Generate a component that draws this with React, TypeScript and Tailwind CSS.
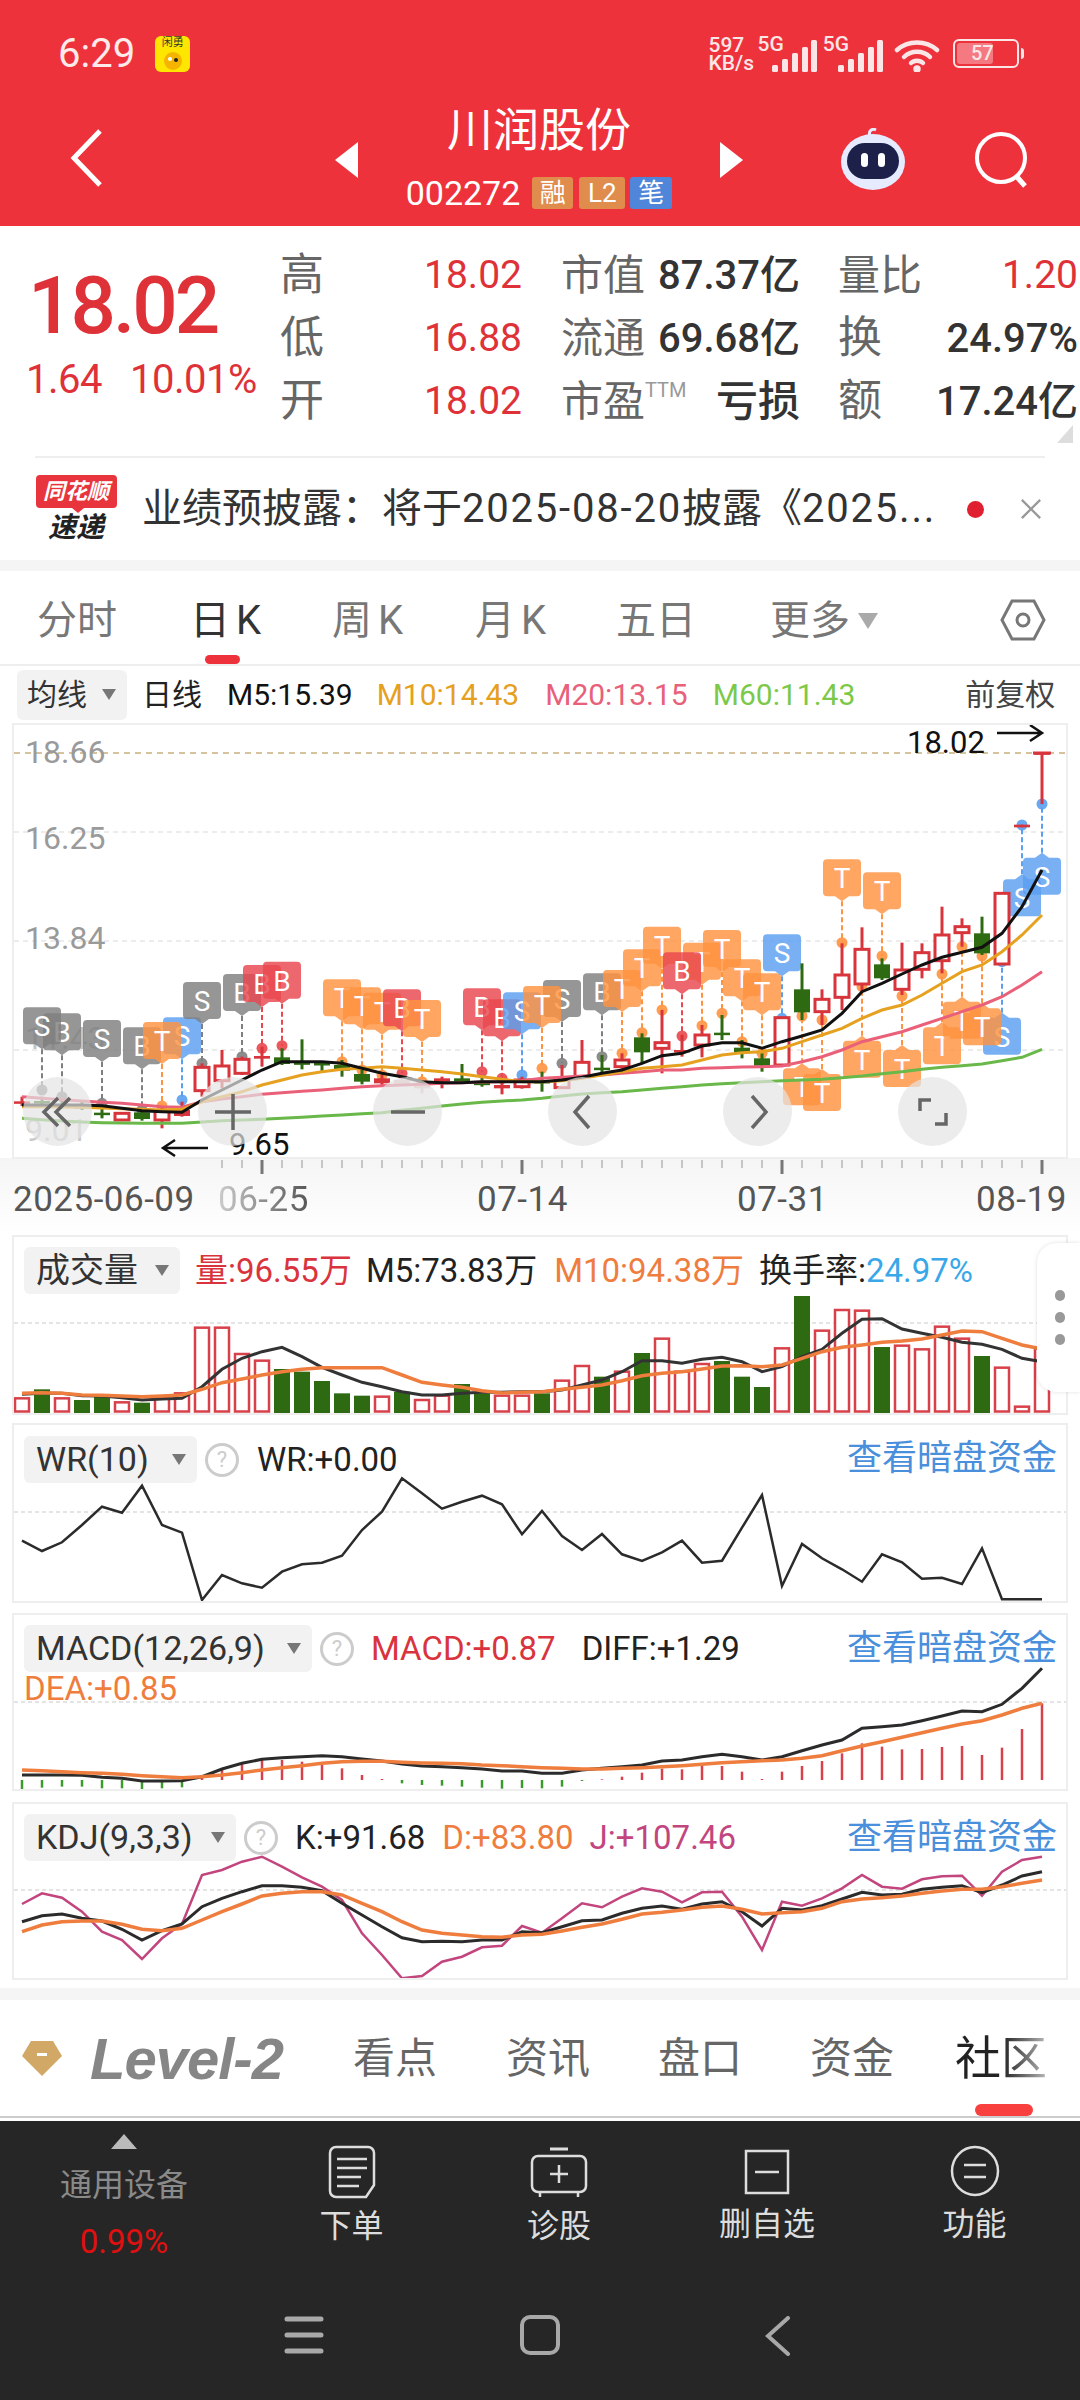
import React from "react";

const X = (i: number) => 22 + 20 * i;
// K-line series are kept in thirds of a pixel: the first 26 sessions from y=900, the rest from y=720.
const KY = (i: number, v: number) => (i < 26 ? 900 : 720) + v / 3;
const line = (vals: number[], f: (i: number, v: number) => number) =>
  vals.map((v, i) => `${X(i)},${f(i, v).toFixed(1)}`).join(" ");

const M5 = [615,615,615,615,617,625,632,635,637,600,570,540,510,485,485,485,490,505,520,530,545,548,548,545,545,545,1085,1080,1072,1060,1050,1030,1007,1000,978,968,968,985,965,948,930,880,815,790,762,735,712,697,682,640,560,450];
const M10 = [620,620,621,622,624,626,628,630,628,605,590,575,555,540,525,515,508,505,500,505,510,515,522,530,538,545,1085,1082,1075,1065,1055,1045,1040,1035,1020,1005,998,995,985,965,945,925,895,870,855,825,790,755,735,695,645,585];
const M20 = [590,595,599,603,607,610,615,620,622,605,597,590,583,578,574,570,565,560,557,555,553,550,548,546,545,542,1075,1072,1068,1065,1060,1055,1050,1050,1045,1043,1041,1040,1038,1025,1010,990,965,950,935,915,895,875,855,830,795,755];
const M60 = [655,659,663,666,668,669,670,670,670,666,662,660,658,655,652,648,645,641,638,631,625,618,612,607,603,600,1135,1128,1122,1118,1115,1110,1105,1100,1095,1091,1088,1085,1082,1080,1078,1073,1068,1061,1055,1048,1042,1037,1032,1022,1012,988];

// top, bottom, wick top, wick bottom, kind (h hollow red, s solid red, g green, p washed out)
type Candle = [number, number, number, number, string];
const CANDLES: Candle[] = [
  [604,610,590,618,"s"],[603,607,590,618,"g"],[612,616,600,625,"g"],[618,622,605,630,"g"],[638,641,625,655,"g"],[640,660,640,660,"h"],[637,657,630,662,"g"],[632,660,620,685,"h"],[630,648,605,650,"s"],
  [502,572,490,590,"h"],[498,542,450,565,"h"],[478,520,470,525,"h"],[468,476,440,500,"s"],[472,492,445,495,"g"],[487,490,418,508,"g"],[489,492,485,518,"g"],[495,512,480,530,"g"],[522,545,510,553,"g"],[535,550,525,557,"s"],[540,555,535,558,"p"],[555,565,545,580,"p"],[535,545,530,565,"s"],[535,545,492,545,"g"],[548,552,530,560,"g"],[555,565,535,583,"s"],[540,560,530,566,"h"],
  [1083,1087,1055,1115,"g"],[1075,1103,1035,1103,"h"],[1027,1070,960,1075,"h"],[1043,1047,1005,1060,"g"],[1020,1040,1000,1050,"h"],[952,997,940,1030,"g"],[968,985,870,1060,"h"],[990,997,945,1010,"s"],[945,975,915,1012,"h"],[938,944,885,960,"g"],[983,997,960,1015,"g"],[1015,1037,1000,1055,"g"],[893,1035,893,1035,"h"],[808,877,730,900,"g"],[838,875,808,915,"h"],[765,832,670,870,"h"],[688,792,622,815,"h"],[733,775,715,780,"g"],[750,808,668,825,"h"],[698,748,670,775,"h"],[645,722,560,760,"h"],[620,638,595,680,"h"],[640,700,590,705,"g"],[520,732,520,732,"h"],[314,322,314,322,"s"],[97,101,97,252,"s"],
];

// Signal kinds: T orange, S grey sell, U blue sell, B red buy, C grey buy
const TAG_COLORS: Record<string, string> = { T: "#FF9340", S: "#7F7F7F", U: "#5A9FF0", B: "#E9474E", C: "#7F7F7F" };
const TAG_LETTER: Record<string, string> = { T: "T", S: "S", U: "S", B: "B", C: "B" };
// session, kind, box top, signal dot, tag sits above (1) or below (0) the candle
const TAGS: [number, string, number, number, number][] = [
  [2,"C",340,590,1],[1,"S",322,570,1],[4,"S",360,610,1],[6,"C",382,630,1],[8,"U",352,600,1],[7,"T",366,618,1],[9,"S",246,490,1],[11,"C",222,470,1],[12,"B",195,445,1],[13,"B",185,437,1],[16,"T",238,485,1],[17,"T",262,510,1],[18,"T",278,525,1],[19,"B",268,520,1],[20,"T",300,545,1],[23,"B",265,515,1],[24,"B",298,535,1],[25,"U",277,525,1],
  [27,"S",780,1030,1],[26,"T",798,1045,1],[29,"C",760,1010,1],[30,"T",750,1000,1],[31,"T",688,938,1],[32,"T",620,870,1],[34,"T",668,917,1],[33,"B",697,948,1],[35,"T",630,880,1],[36,"T",718,965,1],[37,"T",760,1000,1],[38,"U",643,895,1],[41,"T",418,668,1],[43,"T",457,708,1],
  [39,"T",1045,888,0],[40,"T",1062,900,0],[42,"T",962,800,0],[44,"T",990,828,0],[46,"T",922,762,0],[47,"T",845,680,0],[49,"U",893,725,0],[48,"T",865,708,0],[50,"U",478,315,0],[51,"U",413,252,0],
];

function Tag({ t }: { t: [number, string, number, number, number] }) {
  const [i, kind, boxZ, dotZ, up] = t;
  const c = TAG_COLORS[kind];
  const x = X(i);
  const top = KY(i, boxZ);
  const dot = KY(i, dotZ);
  const tipY = up ? top + 42 : top - 5;
  const box = up
    ? `M${x - 15} ${top}h30a4 4 0 0 1 4 4v29a4 4 0 0 1-4 4h-8l-7 5-7-5h-8a4 4 0 0 1-4-4v-29a4 4 0 0 1 4-4z`
    : `M${x} ${top - 5}l7 5h8a4 4 0 0 1 4 4v29a4 4 0 0 1-4 4h-30a4 4 0 0 1-4-4v-29a4 4 0 0 1 4-4h8z`;
  return (
    <g>
      <line x1={x} x2={x} y1={tipY} y2={dot} stroke={c} strokeWidth={2} strokeDasharray="5 3" />
      <circle cx={x} cy={dot} r={5.5} fill={c} fillOpacity={0.9} />
      <path d={box} fill={c} fillOpacity={0.82} />
      <text x={x} y={top + 29} textAnchor="middle" fontSize={28} fill="#fff">
        {TAG_LETTER[kind]}
      </text>
    </g>
  );
}

function CandleMark({ i, c }: { i: number; c: Candle }) {
  const [t, b, wt, wb, kind] = c;
  const x = X(i);
  const col = kind === "g" ? "#2E6A12" : kind === "p" ? "#E9C6C6" : "#D8343C";
  const top = KY(i, t);
  const bot = KY(i, b);
  return (
    <g>
      <line x1={x} x2={x} y1={KY(i, wt)} y2={KY(i, wb)} stroke={col} strokeWidth={3} />
      {kind === "h" ? (
        <rect x={x - 7} y={top} width={14} height={bot - top} fill="#fff" stroke={col} strokeWidth={3} />
      ) : (
        <rect x={x - 8} y={top} width={16} height={Math.max(bot - top, 2.5)} fill={col} />
      )}
    </g>
  );
}

function KChart() {
  return (
    <svg width={1052} height={432} viewBox="14 725 1052 432" className="block">
      <line x1={14} x2={1066} y1={753} y2={753} stroke="#C9AF7E" strokeWidth={1.5} strokeDasharray="6 5" />
      {[832, 941, 1050].map((y) => (
        <line key={y} x1={14} x2={1066} y1={y} y2={y} stroke="#e6e6e6" strokeWidth={1.5} strokeDasharray="5 4" />
      ))}
      <g fontSize={32} fill="#9a9a9a">
        <text x={25} y={763}>18.66</text>
        <text x={25} y={849}>16.25</text>
        <text x={25} y={949}>13.84</text>
        <text x={25} y={1049} fill="#c4c4c4">11.43</text>
        <text x={25} y={1141} fill="#c8c8c8">9.01</text>
      </g>
      {TAGS.map((t) => <Tag key={t[0]} t={t} />)}
      {CANDLES.map((c, i) => <CandleMark key={i} i={i} c={c} />)}
      <line x1={1033} x2={1051} y1={753} y2={753} stroke="#D8343C" strokeWidth={3} />
      <polyline points={line(M60, KY)} fill="none" stroke="#69B849" strokeWidth={3} />
      <polyline points={line(M20, KY)} fill="none" stroke="#EA6079" strokeWidth={3} />
      <polyline points={line(M10, KY)} fill="none" stroke="#E5A11F" strokeWidth={3} />
      <polyline points={line(M5, KY)} fill="none" stroke="#111" strokeWidth={3} />
      <text x={907} y={753} fontSize={31} fill="#111">18.02</text>
      <path d="M997 733h45m-12-8 12 8-12 8" fill="none" stroke="#111" strokeWidth={2.5} />
      <text x={229} y={1155} fontSize={31} fill="#111">9.65</text>
      <path d="M208 1148h-45m12-8-12 8 12 8" fill="none" stroke="#111" strokeWidth={2.5} />
    </svg>
  );
}

function ChartButton({ d }: { d: string }) {
  return (
    <div className="w-[69px] h-[69px] rounded-full bg-[#e4e4e4]/70 flex items-center justify-center">
      <svg width={40} height={40} viewBox="0 0 40 40" fill="none" stroke="#666" strokeWidth={3.5}>
        <path d={d} />
      </svg>
    </div>
  );
}

// Volume bars, thirds of a pixel from y=1230
const VY = (_: number, v: number) => 1230 + v / 3;
const VOL: [string, number][] = [
  ["r",505],["g",478],["r",505],["g",510],["g",500],["r",517],["g",518],["r",505],["r",490],["r",293],["r",293],["r",372],["r",392],["g",417],["g",425],["g",453],["g",490],["g",497],["r",500],["g",485],["r",510],["r",497],["g",462],["g",490],["r",497],["r",497],["g",490],["r",452],["r",408],["g",440],["r",425],["g",369],["r",326],["r",425],["r",402],["g",393],["g",440],["g",471],["r",355],["g",198],["r",302],["r",240],["r",242],["g",351],["r",347],["r",358],["r",290],["r",326],["g",378],["r",413],["r",530],["r",356],
];
const VM5 = [493,490,490,497,498,503,510,507,505,470,418,385,365,352,380,412,435,457,470,485,495,495,490,487,487,485,485,480,465,450,425,392,392,400,388,382,395,425,410,380,358,310,268,266,297,310,322,337,343,358,385,395];
const VM10 = [490,488,490,495,496,498,500,498,495,478,458,447,435,425,418,413,413,413,413,435,457,465,472,482,489,487,485,478,472,465,452,437,430,425,417,408,407,410,405,385,365,352,345,337,333,327,315,303,305,325,345,357];

const WR = [932,963,937,885,830,848,767,885,908,1110,1035,1060,1073,1025,1003,998,977,900,845,745,790,836,815,797,823,913,843,918,960,912,973,993,967,932,998,992,893,795,1068,942,985,1018,1055,973,997,1046,1043,1062,955,1108,1108,1108];

// MACD and KDJ series, thirds of a pixel from y=1600
const MY = (_: number, v: number) => 1600 + v / 3;
const MACD = [568,563,560,560,565,565,568,565,562,528,510,488,480,480,485,495,505,525,537,550,555,557,560,563,566,564,565,560,543,538,530,518,506,508,497,498,515,537,515,498,483,460,430,440,448,447,441,438,465,443,387,310];
const DIFF = [525,525,525,526,532,535,543,543,542,530,507,490,478,473,470,467,470,477,483,492,498,500,503,507,513,513,520,520,510,505,500,495,483,480,470,463,470,480,470,452,435,420,385,380,375,362,348,333,335,313,265,205];
const DEA = [510,512,515,518,520,523,527,530,533,530,525,518,510,503,497,490,485,484,484,487,489,490,491,495,497,500,503,505,507,507,505,503,500,497,493,488,485,482,480,475,467,452,438,425,412,398,385,372,362,345,325,310];
const KDJ_K = [965,947,942,955,963,988,1020,992,972,920,895,875,857,857,862,872,910,945,980,1013,1025,1024,1025,1020,1020,995,998,980,962,960,940,925,918,928,912,905,935,978,925,930,917,897,877,885,883,868,862,857,878,855,828,815];
const KDJ_D = [995,975,965,963,963,973,988,992,985,960,935,912,888,880,875,875,885,910,935,965,990,1000,1005,1010,1012,1005,1003,993,982,972,958,942,937,930,922,918,928,942,938,935,925,905,897,893,888,880,873,868,868,860,850,840];
const KDJ_J = [912,880,893,935,995,1020,1077,1015,972,825,810,785,770,800,832,860,900,1000,1065,1135,1128,1085,1070,1042,1037,978,998,955,910,922,890,865,875,907,877,875,950,1050,905,917,895,865,825,860,866,838,829,827,887,815,780,770];

function Dash({ y }: { y: number }) {
  return <line x1={14} x2={1066} y1={y} y2={y} stroke="#dcdcdc" strokeWidth={1.5} strokeDasharray="4 3" />;
}

function Panel({ top, h, children }: { top: number; h: number; children: React.ReactNode }) {
  return (
    <section className="relative ml-3 w-[1056px] border-2 border-[#eeeeee]">
      <svg width={1052} height={h - 4} viewBox={`14 ${top + 2} 1052 ${h - 4}`} className="block">
        {children}
      </svg>
    </section>
  );
}

function Selector({ label, w }: { label: string; w: string }) {
  return (
    <div className={`${w} h-[47px] rounded-md bg-[#f2f2f2] flex items-center justify-between pl-[12px] pr-[11px] text-[34px] text-[#333] whitespace-nowrap`}>
      <span>{label}</span>
      <span className="w-0 h-0 border-x-[7px] border-t-[11px] border-x-transparent border-t-[#777]" />
    </div>
  );
}

function Help() {
  return (
    <span className="ml-[8px] w-[34px] h-[34px] rounded-full border-[3px] border-[#ccc] text-[#ccc] text-[22px] flex items-center justify-center">?</span>
  );
}

function DarkLink() {
  return <span className="absolute right-[11px] top-[13px] text-[35px] leading-[46px] text-[#4A8FDB]">查看暗盘资金</span>;
}

function BarsSignal() {
  return (
    <svg width={45} height={32} viewBox="0 0 45 32" fill="#fbe6e7">
      <rect x={0} y={25} width={6} height={7} rx={1.5} />
      <rect x={10} y={19} width={6} height={13} rx={1.5} />
      <rect x={20} y={13} width={6} height={19} rx={1.5} />
      <rect x={30} y={7} width={6} height={25} rx={1.5} />
      <rect x={39} y={0} width={6} height={32} rx={1.5} />
    </svg>
  );
}

export default function App() {
  return (
    <div className="relative w-[1080px] h-[2400px] overflow-hidden bg-white font-['Roboto','Noto_Sans_CJK_SC',sans-serif]">
      {/* Top bar */}
      <header className="h-[226px] bg-[#EE323C] text-white">
        <div className="h-[104px] flex items-start justify-between pt-[36px] pl-[58px] pr-[56px]">
          <div className="flex items-center gap-[20px]">
            <span className="text-[40px] leading-[36px] text-[#fdeaea]">6:29</span>
            <div className="w-[35px] h-[36px] rounded-[6px] bg-[#FFE600] flex flex-col items-center text-[#333] overflow-hidden">
              <span className="text-[11px] leading-[14px] whitespace-nowrap">闲勇</span>
              <svg width={26} height={20} viewBox="0 0 26 20">
                <circle cx={13} cy={11} r={9} fill="#F5B400" />
                <circle cx={10} cy={9} r={2} fill="#fff" />
                <circle cx={16} cy={10} r={2} fill="#222" />
              </svg>
            </div>
          </div>
          <div className="flex items-start text-[#fbe6e7] font-medium">
            <div className="flex flex-col text-[21px] leading-[18px] w-[49px]">
              <span>597</span>
              <span>KB/s</span>
            </div>
            <span className="text-[21px] leading-[17px]">5G</span>
            <div className="-ml-[12px] mt-[4px]"><BarsSignal /></div>
            <span className="ml-[6px] text-[21px] leading-[17px]">5G</span>
            <div className="-ml-[11px] mt-[4px]"><BarsSignal /></div>
            <svg className="ml-[11px] mt-[3px]" width={47} height={33} viewBox="0 0 47 33" fill="none" stroke="#fbe6e7" strokeWidth={4.5} strokeLinecap="round">
              <path d="M3 11c11-10 29-10 40 0" />
              <path d="M10 18c7-7 19-7 26 0" />
              <path d="M17 24c3-3 9-3 12 0" />
              <circle cx={23} cy={30} r={1.5} fill="#fbe6e7" />
            </svg>
            <div className="ml-[12px] mt-[3px] flex items-center">
              <div className="w-[66px] h-[29px] rounded-[6px] border-2 border-[#fbe6e7] p-[2px] relative">
                <div className="h-full w-[36px] rounded-[3px] bg-white/35" />
                <span className="absolute left-[16px] top-0 text-[20px] leading-[25px]">57</span>
              </div>
              <span className="ml-[2px] w-[3px] h-[11px] rounded-r bg-[#fbe6e7]" />
            </div>
          </div>
        </div>
        <div className="grid grid-cols-[335px_408px_99px_132px_1fr] items-start">
          <svg className="ml-[68px] mt-[24px]" width={36} height={60} viewBox="0 0 36 60" fill="none" stroke="#fff" strokeWidth={5}>
            <path d="M32 3 6 30l26 27" />
          </svg>
          <div className="flex items-start justify-between">
            <span className="mt-[38px] w-0 h-0 border-y-[18px] border-r-[23px] border-y-transparent border-r-white" />
            <div className="flex flex-col items-center">
              <h1 className="text-[46px] leading-[52px] font-normal">川润股份</h1>
              <div className="mt-[21px] flex items-center">
                <span className="text-[34px] leading-[32px]">002272</span>
                <span className="ml-[12px] w-[41px] h-[32px] rounded-[3px] bg-[#E08C4C] text-[26px] leading-[32px] text-center">融</span>
                <span className="ml-[6px] w-[46px] h-[32px] rounded-[3px] bg-[#E08C4C] text-[26px] leading-[32px] text-center">L2</span>
                <span className="ml-[5px] w-[42px] h-[32px] rounded-[3px] bg-[#4F86D9] text-[26px] leading-[32px] text-center">笔</span>
              </div>
            </div>
            <span className="mt-[38px] w-0 h-0 border-y-[18px] border-l-[23px] border-y-transparent border-l-white" />
          </div>
          <div className="col-start-4 -ml-[2px] mt-[24px]">
            <svg width={66} height={62} viewBox="0 0 66 62">
              <path d="M30 8c-2-5 2-8 6-6" fill="none" stroke="#e7ecff" strokeWidth={3} />
              <ellipse cx={33} cy={34} rx={32} ry={28} fill="#e6ebff" />
              <rect x={7} y={15} width={52} height={36} rx={18} fill="#1D2048" />
              <rect x={21} y={25} width={7} height={14} rx={3.5} fill="#fff" />
              <rect x={38} y={25} width={7} height={14} rx={3.5} fill="#fff" />
            </svg>
          </div>
          <svg className="mt-[28px]" width={58} height={56} viewBox="0 0 58 56" fill="none" stroke="#fff" strokeWidth={4}>
            <circle cx={27} cy={26} r={24} />
            <path d="M43 45l8 9" strokeWidth={5} />
          </svg>
        </div>
      </header>

      {/* Quote summary */}
      <section className="relative h-[230px] flex pt-[18px]">
        <div className="w-[280px] pl-[28px]">
          <div className="text-[80px] leading-[88px] mt-[18px] tracking-[-3px] text-[#DE3138] font-medium">18.02</div>
          <div className="mt-[8px] flex text-[#DE3138] text-[40px] leading-[44px] tracking-[-0.5px]">
            <span className="-ml-[2px]">1.64</span>
            <span className="ml-[28px]">10.01%</span>
          </div>
        </div>
        <div className="grid grid-cols-[242px_278px_278px] auto-rows-[63px] text-[42px] leading-[63px] text-[#666]">
          <div className="flex justify-between"><span className="text-[44px]">高</span><span className="text-[#DE3138] text-[39px]">18.02</span></div>
          <div className="pl-[39px] flex justify-between"><span>市值</span><span className="text-[#333] text-[40px] font-medium">87.37亿</span></div>
          <div className="pl-[38px] flex justify-between"><span>量比</span><span className="text-[#DE3138] text-[39px]">1.20</span></div>
          <div className="flex justify-between"><span className="text-[44px]">低</span><span className="text-[#DE3138] text-[39px]">16.88</span></div>
          <div className="pl-[39px] flex justify-between"><span>流通</span><span className="text-[#333] text-[40px] font-medium">69.68亿</span></div>
          <div className="pl-[38px] flex justify-between"><span className="text-[44px]">换</span><span className="text-[#333] text-[40px] font-medium">24.97%</span></div>
          <div className="flex justify-between"><span className="text-[44px]">开</span><span className="text-[#DE3138] text-[39px]">18.02</span></div>
          <div className="pl-[39px] flex justify-between">
            <span className="flex items-start">市盈<span className="text-[20px] leading-[40px] text-[#999]">TTM</span></span>
            <span className="text-[#333] text-[42px] font-medium">亏损</span>
          </div>
          <div className="pl-[38px] flex justify-between"><span className="text-[44px]">额</span><span className="text-[#333] text-[40px] font-medium">17.24亿</span></div>
        </div>
        <span className="absolute right-[7px] bottom-[13px] w-0 h-0 border-l-[16px] border-b-[18px] border-l-transparent border-b-[#ddd]" />
      </section>

      {/* News strip */}
      <div className="mx-[35px] border-t-2 border-[#eeeeee] h-[104px] flex items-center">
        <div className="w-[82px] flex flex-col items-center">
          <div className="relative w-[81px] h-[33px] rounded-[4px] bg-[#E8343C] text-white text-[22px] leading-[33px] text-center italic font-bold whitespace-nowrap">
            同花顺
            <span className="absolute left-[36px] top-full w-0 h-0 border-x-[6px] border-t-[5px] border-x-transparent border-t-[#E8343C]" />
          </div>
          <div className="mt-[5px] text-[#222] text-[28px] leading-[30px] italic font-bold">速递</div>
        </div>
        <div className="ml-[25px] w-[805px] text-[40px] leading-[50px] text-[#333] whitespace-nowrap">
          业绩预披露：将于<span className="tracking-[1.8px]">2025-08-20</span>披露《<span className="tracking-[1.8px]">2025...</span>
        </div>
        <span className="ml-[20px] w-[17px] h-[17px] rounded-full bg-[#E02030]" />
        <svg className="ml-[36px]" width={22} height={24} viewBox="0 0 24 24" stroke="#999" strokeWidth={2.5}>
          <path d="M2 2l20 20M22 2 2 22" />
        </svg>
      </div>

      <div className="h-[11px] bg-[#f5f5f5]" />

      {/* Period tabs */}
      <nav className="h-[95px] pt-[6px] border-b-2 border-[#eeeeee] grid grid-cols-[153px_142px_143px_141px_154px_230px_1fr] pl-[37px] items-center text-[40px] text-[#777] relative">
        <span>分时</span>
        <span className="relative text-[#333]">日<span className="ml-[6px]">K</span>
          <span className="absolute left-[15px] top-[64px] w-[35px] h-[9px] rounded-full bg-[#EE323C]" />
        </span>
        <span>周<span className="ml-[6px]">K</span></span>
        <span>月<span className="ml-[6px]">K</span></span>
        <span>五日</span>
        <span className="flex items-center">更多<span className="ml-[8px] w-0 h-0 border-x-[10px] border-t-[16px] border-x-transparent border-t-[#aaa]" /></span>
        <svg className="absolute left-[1000px] top-[28px]" width={46} height={42} viewBox="0 0 46 42" fill="none" stroke="#777" strokeWidth={3}>
          <path d="M12 2h22l10 19-10 19H12L2 21z" />
          <circle cx={23} cy={21} r={6} />
        </svg>
      </nav>

      {/* Moving average legend */}
      <div className="h-[57px] flex items-center text-[30px] pl-[17px]">
        <div className="w-[110px] h-[50px] rounded-md bg-[#f2f2f2] flex items-center justify-between pl-[10px] pr-[11px] text-[#333]">
          <span>均线</span>
          <span className="w-0 h-0 border-x-[7px] border-t-[11px] border-x-transparent border-t-[#777]" />
        </div>
        <span className="ml-[15px] text-[#222]">日线</span>
        <span className="ml-[25px] text-[#111]">M5:15.39</span>
        <span className="ml-[24px] text-[#E5A020]">M10:14.43</span>
        <span className="ml-[26px] text-[#E8607A]">M20:13.15</span>
        <span className="ml-[25px] text-[#7CC94A]">M60:11.43</span>
        <span className="ml-[110px] text-[#444]">前复权</span>
      </div>

      {/* K-line chart */}
      <section className="relative ml-3 w-[1056px] border-2 border-[#eeeeee]">
        <KChart />
        <div className="absolute left-[9px] top-[352px] flex gap-[106px]">
          <ChartButton d="M20 6 6 20l14 14M32 6 18 20l14 14" />
          <ChartButton d="M20 2v36M2 20h36" />
          <ChartButton d="M3 20h34" />
          <ChartButton d="M26 4 12 20l14 16" />
          <ChartButton d="M14 4l14 16-14 16" />
          <ChartButton d="M18 8H7v11M22 32h11V21" />
        </div>
      </section>

      {/* Date axis */}
      <div className="h-[77px] -mt-[1px] bg-linear-to-b from-[#f5f5f5] to-white">
        <svg width={1080} height={24} viewBox="0 0 1080 24" className="block">
          {Array.from({ length: 42 }, (_, k) => k + 10).map((i) =>
            (i - 12) % 13 === 0 ? (
              <line key={i} x1={X(i)} x2={X(i)} y1={2} y2={16} stroke="#777" strokeWidth={3} />
            ) : (
              <line key={i} x1={X(i)} x2={X(i)} y1={2} y2={10} stroke="#b5b5b5" strokeWidth={1.5} />
            ),
          )}
        </svg>
        <div className="grid grid-cols-[205px_259px_260px_239px_1fr] pl-[13px] text-[35px] leading-[36px] text-[#555] tracking-[0.5px]">
          <span>2025-06-09</span>
          <span className="w-[92px] bg-linear-to-r from-[#ccc] to-[#555] bg-clip-text text-transparent">06-25</span>
          <span>07-14</span>
          <span>07-31</span>
          <span>08-19</span>
        </div>
      </div>

      {/* Volume */}
      <div className="relative">
        <Panel top={1235} h={180}>
          <Dash y={1323} />
          {VOL.map(([k, v], i) =>
            k === "g" ? (
              <rect key={i} x={X(i) - 8} y={VY(i, v)} width={16} height={1413 - VY(i, v)} fill="#2E6A12" />
            ) : (
              <rect key={i} x={X(i) - 7} y={VY(i, v)} width={14} height={1411.5 - VY(i, v)} fill="#fff" stroke="#D8404A" strokeWidth={2.5} />
            ),
          )}
          <polyline points={line(VM5, VY)} fill="none" stroke="#333" strokeWidth={3} />
          <polyline points={line(VM10, VY)} fill="none" stroke="#EE7D3E" strokeWidth={3.5} />
        </Panel>
        <div className="absolute left-[24px] top-[11px] flex items-center text-[33px] whitespace-nowrap">
          <Selector label="成交量" w="w-[156px]" />
          <span className="ml-[15px] text-[#D9343D]">量:96.55万</span>
          <span className="ml-[14px] text-[#222]">M5:73.83万</span>
          <span className="ml-[17px] text-[#EE7D3E]">M10:94.38万</span>
          <span className="ml-[15px] text-[#222]">换手率:<span className="text-[#3AA7E8]">24.97%</span></span>
        </div>
        <div className="absolute right-0 top-[8px] w-[43px] h-[149px] rounded-l-[20px] bg-white shadow-[0_0_4px_rgba(0,0,0,0.12)] flex flex-col items-center justify-center gap-[11px] pl-[2px]">
          <span className="w-[10px] h-[11px] rounded-full bg-[#999]" />
          <span className="w-[10px] h-[11px] rounded-full bg-[#999]" />
          <span className="w-[10px] h-[11px] rounded-full bg-[#999]" />
        </div>
      </div>

      {/* WR */}
      <div className="relative mt-[8px]">
        <Panel top={1423} h={180}>
          <Dash y={1512} />
          <polyline points={line(WR, VY)} fill="none" stroke="#2b2b2b" strokeWidth={2.5} />
        </Panel>
        <div className="absolute left-[24px] top-[12px] flex items-center text-[33px] text-[#222]">
          <Selector label="WR(10)" w="w-[173px]" />
          <Help />
          <span className="ml-[18px]">WR:+0.00</span>
        </div>
        <div className="absolute left-3 top-0 w-[1056px]"><DarkLink /></div>
      </div>

      {/* MACD */}
      <div className="relative mt-[10px]">
        <Panel top={1613} h={178}>
          <Dash y={1702} />
          {MACD.map((v, i) => (
            <line key={i} x1={X(i)} x2={X(i)} y1={1780} y2={MY(i, v)} stroke={v > 540 ? "#3C9A2E" : "#D8404A"} strokeWidth={2.5} />
          ))}
          <polyline points={line(DIFF, MY)} fill="none" stroke="#2b2b2b" strokeWidth={3} />
          <polyline points={line(DEA, MY)} fill="none" stroke="#EE7D3E" strokeWidth={3.5} />
        </Panel>
        <div className="absolute left-[24px] top-[11px] flex items-center text-[33px] whitespace-nowrap">
          <Selector label="MACD(12,26,9)" w="w-[288px]" />
          <Help />
          <span className="ml-[17px] text-[#D9343D]">MACD:+0.87</span>
          <span className="ml-[26px] text-[#222]">DIFF:+1.29</span>
        </div>
        <div className="absolute left-[24px] top-[58px] text-[33px] leading-[36px] text-[#EE7D3E]">DEA:+0.85</div>
        <div className="absolute left-3 top-0 w-[1056px]"><DarkLink /></div>
      </div>

      {/* KDJ */}
      <div className="relative mt-[11px]">
        <Panel top={1802} h={178}>
          <Dash y={1890} />
          <polyline points={line(KDJ_J, MY)} fill="none" stroke="#C2457E" strokeWidth={2.5} />
          <polyline points={line(KDJ_K, MY)} fill="none" stroke="#2b2b2b" strokeWidth={3} />
          <polyline points={line(KDJ_D, MY)} fill="none" stroke="#EE7D3E" strokeWidth={3.5} />
        </Panel>
        <div className="absolute left-[24px] top-[11px] flex items-center text-[33px] whitespace-nowrap">
          <Selector label="KDJ(9,3,3)" w="w-[212px]" />
          <Help />
          <span className="ml-[17px] text-[#222]">K:+91.68</span>
          <span className="ml-[17px] text-[#EE7D3E]">D:+83.80</span>
          <span className="ml-[16px] text-[#C2457E]">J:+107.46</span>
        </div>
        <div className="absolute left-3 top-0 w-[1056px]"><DarkLink /></div>
      </div>

      <div className="h-[12px] mt-[8px] bg-[#f5f5f5]" />

      {/* Section tabs */}
      <nav className="relative h-[118px] border-b-2 border-[#cccccc] flex items-center pl-[22px] text-[42px] text-[#666]">
        <svg width={40} height={36} viewBox="0 0 40 36">
          <path d="M9 1h22l9 15-20 20L0 16z" fill="#D2A867" />
          <rect x={15} y={13} width={10} height={3} fill="#fff" />
        </svg>
        <span className="ml-[28px] w-[263px] text-[58px] font-bold italic text-[#868686] font-['Liberation_Sans',sans-serif] tracking-[-1px]">Level-2</span>
        <span className="w-[153px]">看点</span>
        <span className="w-[152px]">资讯</span>
        <span className="w-[152px]">盘口</span>
        <span className="w-[145px]">资金</span>
        <span className="text-[46px] bg-linear-to-r from-[#222] from-50% to-[#bbb] bg-clip-text text-transparent">社区</span>
        <span className="absolute left-[975px] bottom-0 w-[58px] h-[12px] rounded-full bg-[#F8403F]" />
      </nav>

      {/* Bottom toolbar */}
      <footer className="mt-[3px] h-[279px] bg-[#262626]">
        <div className="h-[190px] flex">
          <div className="w-[248px] flex flex-col items-center pt-[13px]">
            <span className="w-0 h-0 border-x-[13px] border-b-[15px] border-x-transparent border-b-[#bbb]" />
            <span className="mt-[16px] text-[32px] leading-[40px] text-[#8a8a8a]">通用设备</span>
            <span className="mt-[17px] text-[33px] leading-[40px] text-[#E01010]">0.99%</span>
          </div>
          <div className="flex-1 grid grid-cols-[207px_208px_208px_1fr] text-[#ddd] text-[32px] leading-[40px]">
            <div className="flex flex-col items-center">
              <svg className="mt-[24px]" width={48} height={54} viewBox="0 0 48 54" fill="none" stroke="#ddd" strokeWidth={2.5}>
                <path d="M8 2h32a6 6 0 0 1 6 6v32l-8 12H8a6 6 0 0 1-6-6V8a6 6 0 0 1 6-6z" />
                <path d="M9 14h30M9 23h30M9 32h24M9 41h22" />
              </svg>
              <span className="mt-[7px]">下单</span>
            </div>
            <div className="flex flex-col items-center">
              <svg className="mt-[26px]" width={58} height={52} viewBox="0 0 58 52" fill="none" stroke="#ddd" strokeWidth={2.5}>
                <path d="M20 2h18" strokeWidth={3} />
                <rect x={2} y={9} width={54} height={36} rx={6} />
                <path d="M29 18v18M20 27h18M10 45v5M48 45v5" />
              </svg>
              <span className="mt-[7px]">诊股</span>
            </div>
            <div className="flex flex-col items-center">
              <svg className="mt-[28px]" width={46} height={46} viewBox="0 0 46 46" fill="none" stroke="#ddd" strokeWidth={2.5}>
                <rect x={2} y={2} width={42} height={42} />
                <path d="M11 23h24" />
              </svg>
              <span className="mt-[9px]">删自选</span>
            </div>
            <div className="flex flex-col items-center -ml-[2px]">
              <svg className="mt-[24px]" width={50} height={52} viewBox="0 0 50 52" fill="none" stroke="#ddd" strokeWidth={2.5}>
                <ellipse cx={25} cy={26} rx={23} ry={24} />
                <path d="M14 20h22M14 32h22" />
              </svg>
              <span className="mt-[7px]">功能</span>
            </div>
          </div>
        </div>
        <div className="flex items-start pl-[284px] pt-[5px]">
          <svg width={40} height={38} viewBox="0 0 40 38" stroke="#a8a8a8" strokeWidth={5} strokeLinecap="round">
            <path d="M3 3h34M3 19h34M3 35h34" />
          </svg>
          <svg className="ml-[196px] -mt-[1px]" width={40} height={40} viewBox="0 0 40 40" fill="none" stroke="#a8a8a8" strokeWidth={4}>
            <rect x={2} y={2} width={36} height={36} rx={8} />
          </svg>
          <svg className="ml-[204px]" width={27} height={40} viewBox="0 0 27 40" fill="none" stroke="#a8a8a8" strokeWidth={4} strokeLinecap="round">
            <path d="M24 2 4 20l20 18" />
          </svg>
        </div>
      </footer>
    </div>
  );
}
